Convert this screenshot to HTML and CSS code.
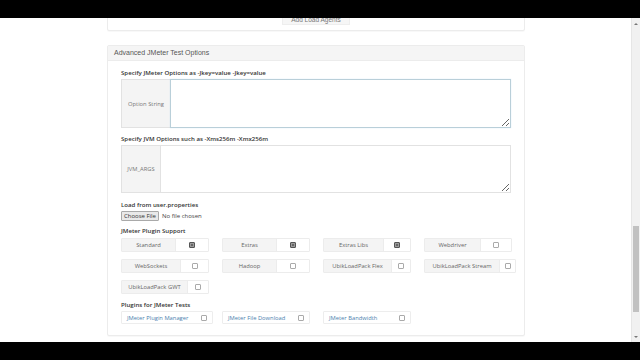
FILE: index.html
```html
<!DOCTYPE html>
<html lang="en">
<head>
  <meta charset="UTF-8" />
  <meta name="viewport" content="width=device-width, initial-scale=1.0" />
  <title>JMeter Test Options</title>
  <link rel="stylesheet" href="styles.css">
</head>
<body>
  <div class="bar-top"></div>
  <div class="viewport">
    <div class="page">
      <div class="content">

        <div class="panel panel-prev">
          <div class="center">
            <button class="btn">Add Load Agents</button>
          </div>
        </div>

        <div class="panel">
          <div class="panel-heading">Advanced JMeter Test Options</div>
          <div class="panel-body">

            <label class="field-label first">Specify JMeter Options as -Jkey=value -Jkey=value</label>
            <div class="input-group tall">
              <span class="addon addon-wide">Option String</span>
              <textarea class="text-input focus"></textarea>
            </div>

            <label class="field-label">Specify JVM Options such as -Xms256m -Xmx256m</label>
            <div class="input-group tall jvm">
              <span class="addon addon-narrow">JVM_ARGS</span>
              <textarea class="text-input"></textarea>
            </div>

            <label class="field-label">Load from user.properties</label>
            <div class="file-row">
              <span class="file-btn">Choose File</span>
              <span class="file-name">No file chosen</span>
            </div>

            <label class="field-label small-gap">JMeter Plugin Support</label>
            <div class="plugin-grid">
              <div class="opt"><span class="opt-name">Standard</span><span class="opt-box"><span class="check on"></span></span></div>
              <div class="opt"><span class="opt-name">Extras</span><span class="opt-box"><span class="check on"></span></span></div>
              <div class="opt"><span class="opt-name w60">Extras Libs</span><span class="opt-box"><span class="check on"></span></span></div>
              <div class="opt"><span class="opt-name w56">Webdriver</span><span class="opt-box"><span class="check"></span></span></div>

              <div class="opt"><span class="opt-name w59">WebSockets</span><span class="opt-box"><span class="check"></span></span></div>
              <div class="opt"><span class="opt-name">Hadoop</span><span class="opt-box"><span class="check"></span></span></div>
              <div class="opt"><span class="opt-name w68">UbikLoadPack Flex</span><span class="opt-box"><span class="check"></span></span></div>
              <div class="opt wide"><span class="opt-name w75">UbikLoadPack Stream</span><span class="opt-box"><span class="check"></span></span></div>

              <div class="opt"><span class="opt-name w66">UbikLoadPack GWT</span><span class="opt-box"><span class="check"></span></span></div>
            </div>

            <label class="field-label">Plugins for JMeter Tests</label>
            <div class="plugin-grid tests">
              <div class="test-opt"><a class="test-link">JMeter Plugin Manager</a><span class="check"></span></div>
              <div class="test-opt"><a class="test-link">JMeter File Download</a><span class="check"></span></div>
              <div class="test-opt"><a class="test-link">JMeter Bandwidth</a><span class="check"></span></div>
            </div>

          </div>
        </div>

      </div>
    </div>
    <div class="scrollbar">
      <span class="arrow up"></span>
      <span class="thumb"></span>
      <span class="arrow down"></span>
    </div>
  </div>
  <div class="bar-bottom"></div>
</body>
</html>
```

FILE: styles.css
```css
body {
  margin: 0;
  background: #000;
  font-family: "Open Sans", "Liberation Sans", sans-serif;
  color: #333;
}
.bar-top {
  height: 18px;
  background: #000;
}
.bar-bottom {
  height: 18px;
  background: #000;
}
.viewport {
  height: 324px;
  display: flex;
  background: #fff;
}
.page {
  flex: 1;
  overflow: hidden;
}
.content {
  width: 418px;
  margin: -21px 0 0 107px;
}
.panel {
  border: 1px solid #ececec;
  border-radius: 2px;
  background: #fff;
  box-shadow: 0 1px 1px rgba(0,0,0,0.03);
}
.panel-prev {
  padding: 7px 0 3px;
  margin-bottom: 14px;
}
.center {
  text-align: center;
}
.btn {
  font-family: "Liberation Sans", sans-serif;
  font-size: 6.5px;
  color: #777;
  background: #f6f6f6;
  border: 1px solid #eee;
  padding: 1px 8px;
  height: 11px;
  line-height: 8px;
}
.panel-heading {
  height: 14px;
  line-height: 14px;
  padding: 0 6px;
  background: #f5f5f5;
  border-bottom: 1px solid #ececec;
  font-family: "Liberation Sans", sans-serif;
  font-size: 7px;
  color: #555;
}
.panel-body {
  padding: 0 13px 11px 13px;
}
.field-label {
  display: block;
  height: 9px;
  line-height: 9px;
  margin: 6px 0 2px;
  font-size: 6.1px;
  font-weight: 600;
  color: #333;
}
.field-label.first {
  margin-top: 7px;
}
.field-label.small-gap {
  margin-top: 5px;
  margin-bottom: 3px;
}
.input-group {
  display: flex;
}
.input-group.tall {
  height: 49px;
}
.input-group.jvm {
  height: 48px;
  margin-bottom: 7px;
}
.addon {
  display: flex;
  align-items: center;
  justify-content: center;
  background: #f4f4f4;
  border: 1px solid #e2e2e2;
  border-right: none;
  font-size: 5.8px;
  color: #777;
}
.addon-wide {
  width: 48px;
}
.addon-narrow {
  width: 38px;
}
.text-input {
  flex: 1;
  margin: 0;
  border: 1px solid #e2e2e2;
  background: #fff;
  resize: vertical;
  padding: 0;
}
.text-input.focus {
  border: 1px solid #b9cfd9;
  box-shadow: 0 0 1px rgba(102,175,233,0.3);
}
.file-row {
  display: flex;
  align-items: center;
  height: 10px;
}
.file-btn {
  height: 8px;
  line-height: 8px;
  padding: 0 2px;
  border: 1px solid #a9a9a9;
  border-radius: 1px;
  background: #e9e9e9;
  font-size: 6px;
  color: #333;
}
.file-name {
  margin-left: 3px;
  font-size: 6px;
  color: #444;
}
.plugin-grid {
  display: grid;
  grid-template-columns: repeat(4, 88px);
  grid-auto-rows: 14px;
  column-gap: 13px;
  row-gap: 7px;
}
.opt {
  display: flex;
  border: 1px solid #ececec;
  border-radius: 1px;
}
.opt.wide {
  width: 90px;
}
.opt-name {
  width: 53px;
  display: flex;
  align-items: center;
  justify-content: center;
  background: #f4f4f4;
  border-right: 1px solid #ececec;
  font-size: 5.8px;
  color: #666;
  white-space: nowrap;
}
.opt-name.w56 { width: 55px; }
.opt-name.w59 { width: 58px; }
.opt-name.w60 { width: 59px; }
.opt-name.w66 { width: 65px; }
.opt-name.w68 { width: 67px; }
.opt-name.w75 { width: 74px; }
.opt-box {
  flex: 1;
  display: flex;
  align-items: center;
  justify-content: center;
}
.check {
  display: inline-block;
  width: 4px;
  height: 4px;
  border: 1px solid #aaa;
  border-radius: 1px;
  background: #fff;
}
.check.on {
  background: #666;
  border-color: #555;
  box-shadow: inset 0 0 0 1px #9a9a9a;
}
.plugin-grid.tests {
  margin-top: 1px;
  grid-auto-rows: 13px;
}
.test-opt {
  display: flex;
  align-items: center;
  justify-content: space-between;
  padding: 0 5px 0 5px;
  border: 1px solid #ededed;
  border-radius: 1px;
}
.test-opt:first-child {
  width: 80px;
}
.test-link {
  font-size: 5.8px;
  color: #4d7fae;
  white-space: nowrap;
}
.scrollbar {
  width: 8px;
  position: relative;
  background: #f1f1f1;
  border-left: 1px solid #e6e6e6;
}
.thumb {
  position: absolute;
  left: 1px;
  right: 1px;
  top: 208px;
  height: 86px;
  background: #c1c1c1;
}
.arrow {
  position: absolute;
  left: 2px;
  width: 0;
  height: 0;
  border-left: 2px solid transparent;
  border-right: 2px solid transparent;
}
.arrow.up {
  top: 5px;
  border-bottom: 2px solid #777;
}
.arrow.down {
  bottom: 4px;
  border-top: 2px solid #777;
}
```
